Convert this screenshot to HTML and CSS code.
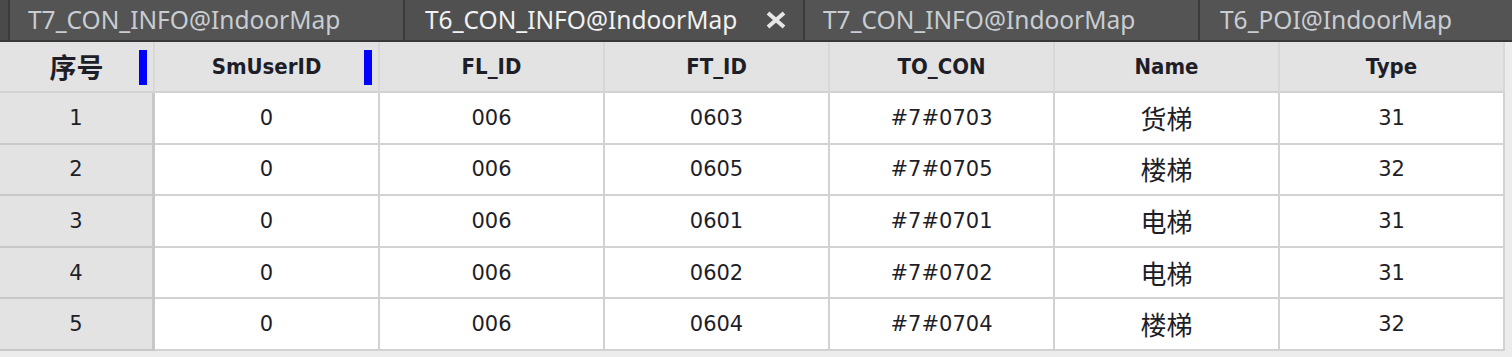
FILE: index.html
```html
<!DOCTYPE html>
<html>
<head>
<meta charset="utf-8">
<link rel="stylesheet" href="styles.css">
</head>
<body>
<div class="tabbar">
  <div class="tab">T7_CON_INFO@IndoorMap</div>
  <div class="tab active">T6_CON_INFO@IndoorMap<svg class="close" width="22" height="18" viewBox="0 0 22 18"><path d="M3 2 L19 16 M19 2 L3 16" stroke="#e6e6e6" stroke-width="4" stroke-linecap="butt"/></svg></div>
  <div class="tab">T7_CON_INFO@IndoorMap</div>
  <div class="tab last">T6_POI@IndoorMap</div>
</div>
<div class="grid">
  <div class="hd"><span class="zh">序号</span><span class="mark"></span></div>
  <div class="hd">SmUserID<span class="mark"></span></div>
  <div class="hd">FL_ID</div>
  <div class="hd">FT_ID</div>
  <div class="hd">TO_CON</div>
  <div class="hd">Name</div>
  <div class="hd">Type</div>

  <div class="rh">1</div><div class="c">0</div><div class="c">006</div><div class="c">0603</div><div class="c">#7#0703</div><div class="c"><span class="zh">货梯</span></div><div class="c">31</div>
  <div class="rh">2</div><div class="c">0</div><div class="c">006</div><div class="c">0605</div><div class="c">#7#0705</div><div class="c"><span class="zh">楼梯</span></div><div class="c">32</div>
  <div class="rh">3</div><div class="c">0</div><div class="c">006</div><div class="c">0601</div><div class="c">#7#0701</div><div class="c"><span class="zh">电梯</span></div><div class="c">31</div>
  <div class="rh">4</div><div class="c">0</div><div class="c">006</div><div class="c">0602</div><div class="c">#7#0702</div><div class="c"><span class="zh">电梯</span></div><div class="c">31</div>
  <div class="rh">5</div><div class="c">0</div><div class="c">006</div><div class="c">0604</div><div class="c">#7#0704</div><div class="c"><span class="zh">楼梯</span></div><div class="c">32</div>
</div>
</body>
</html>
```
FILE: styles.css
```css
html, body {
  margin: 0;
  padding: 0;
  background: #ececec;
  overflow: hidden;
}
body {
  width: 1512px;
  height: 357px;
  font-family: "DejaVu Sans", "Noto Sans CJK SC", sans-serif;
}
.tabbar {
  display: flex;
  height: 40px;
  background: #4a4a4a;
  border-bottom: 2px solid #383838;
  padding-left: 8px;
  box-sizing: content-box;
}
.tab {
  width: 395px;
  height: 40px;
  border-left: 2px solid #3c3c3c;
  background: #545454;
  color: #c9cdd2;
  font-family: "Noto Sans", "Noto Sans CJK SC", sans-serif;
  font-size: 24.5px;
  padding-left: 18px;
  padding-bottom: 1px;
  box-sizing: border-box;
  display: flex;
  align-items: center;
  white-space: nowrap;
}
.tab.active {
  width: 400px;
  background: #505050;
  color: #f2f2f2;
  padding-left: 20px;
}
.tab.last {
  flex: 1;
  width: auto;
  padding-left: 20px;
}
.close {
  margin-left: 28px;
  margin-top: 1px;
}
.grid {
  display: grid;
  grid-template-columns: 155px repeat(6, 225px);
  grid-template-rows: 51px repeat(5, 51.6px);
  width: 1505px;
  border-right: 2px solid #d4d4d4;
  box-sizing: border-box;
  font-family: "DejaVu Sans", "Noto Sans CJK SC", sans-serif;
  font-size: 21px;
  color: #1e1e28;
}
.hd, .rh, .c {
  display: flex;
  align-items: center;
  justify-content: center;
  border-right: 2px solid #d2d2d2;
  border-bottom: 2px solid #d2d2d2;
  box-sizing: border-box;
  position: relative;
}
.hd {
  background: #e3e3e3;
  font-weight: bold;
  font-stretch: condensed;
  font-size: 22px;
  border-right-color: #d8d8d8;
}
.rh {
  background: #e3e3e3;
  border-right: 3px solid #c8c8c8;
  border-bottom-color: #c8c8c8;
}
.c {
  background: #ffffff;
}
.zh {
  font-family: "Noto Sans CJK SC", sans-serif;
  font-size: 26px;
  line-height: 1;
}
.hd .zh {
  font-size: 27px;
}
.mark {
  position: absolute;
  right: 6px;
  top: 8px;
  width: 8px;
  height: 35px;
  background: #0000ff;
}
```
